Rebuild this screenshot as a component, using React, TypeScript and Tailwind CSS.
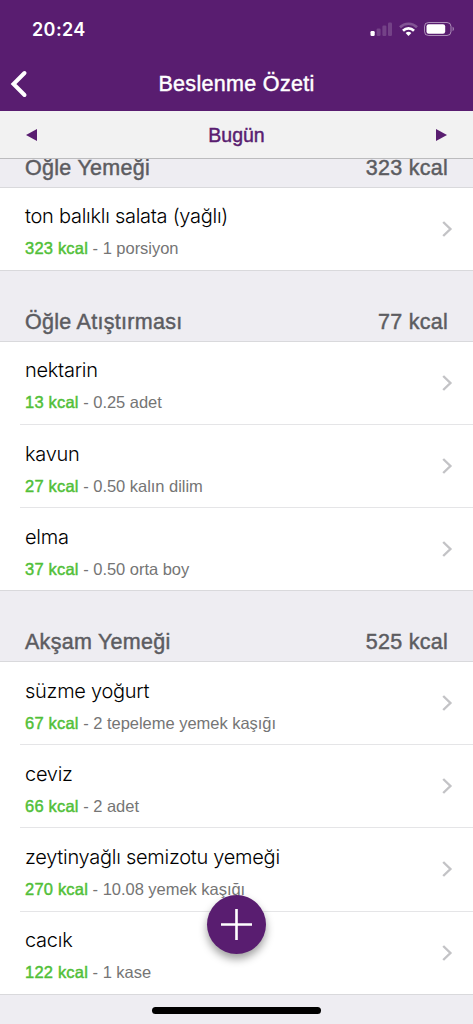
import React from 'react';

type Food = { name: string; kcal: string; amount: string };
type Meal = { title: string; kcal: string; foods: Food[] };

const meals: Meal[] = [
  {
    title: "Öğle Yemeği",
    kcal: "323 kcal",
    foods: [{ name: "ton balıklı salata (yağlı)", kcal: "323 kcal", amount: "1 porsiyon" }],
  },
  {
    title: "Öğle Atıştırması",
    kcal: "77 kcal",
    foods: [
      { name: "nektarin", kcal: "13 kcal", amount: "0.25 adet" },
      { name: "kavun", kcal: "27 kcal", amount: "0.50 kalın dilim" },
      { name: "elma", kcal: "37 kcal", amount: "0.50 orta boy" },
    ],
  },
  {
    title: "Akşam Yemeği",
    kcal: "525 kcal",
    foods: [
      { name: "süzme yoğurt", kcal: "67 kcal", amount: "2 tepeleme yemek kaşığı" },
      { name: "ceviz", kcal: "66 kcal", amount: "2 adet" },
      { name: "zeytinyağlı semizotu yemeği", kcal: "270 kcal", amount: "10.08 yemek kaşığı" },
      { name: "cacık", kcal: "122 kcal", amount: "1 kase" },
    ],
  },
];

const StatusBar = () => (
  <div className="h-[58px] pl-8 pr-[18px] flex items-center justify-between">
    <span className="font-['Inter'] text-[18px] font-semibold tracking-[0.4px]">20:24</span>
    <div className="flex items-center gap-[6px]">
      <svg width="23" height="14" viewBox="0 0 23 14" fill="white">
        <rect x="0.5" y="9" width="4.2" height="5" rx="1.2" />
        <g opacity="0.16">
          <rect x="6.6" y="6.5" width="4" height="7.5" rx="1.2" />
          <rect x="12.4" y="3.5" width="4" height="10.5" rx="1.2" />
          <rect x="18" y="0.5" width="4" height="13.5" rx="1.2" />
        </g>
      </svg>
      <svg width="19" height="14" viewBox="0 0 19 14" fill="none" stroke="white" strokeWidth="2.7">
        <path d="M1 5.2a12.2 12.2 0 0 1 17 0" opacity="0.25" />
        <path d="M4 8.7a7.9 7.9 0 0 1 11 0" />
        <path d="M6.6 11.1a4.2 4.2 0 0 1 5.8 0L9.5 14z" fill="white" stroke="none" />
      </svg>
      <svg width="31" height="14" viewBox="0 0 31 14">
        <rect x="0.5" y="0.5" width="26.5" height="13" rx="4" fill="none" stroke="white" strokeOpacity="0.5" />
        <rect x="2.5" y="2.2" width="18.7" height="9.6" rx="2.2" fill="white" />
        <path d="M28.6 4.8c1.6.6 1.6 3.8 0 4.4z" fill="white" fillOpacity="0.5" />
      </svg>
    </div>
  </div>
);

const FoodRow = ({ food, last }: { food: Food; last: boolean }) => (
  <div className={`h-[83.2px] flex ${last ? "border-b border-[#d9d9dc]" : "pl-5"}`}>
    <div className={`flex-1 flex items-center justify-between pr-[20px] ${last ? "pl-[25px]" : "pl-[5px] border-b border-[#e5e5e7]"}`}>
      <div className="pt-1 flex flex-col">
        <div className="font-['Inter'] font-light text-[20px] leading-[26px] tracking-[-0.27px] text-black whitespace-nowrap">{food.name}</div>
        <div className="mt-[9px] text-[16.5px] leading-5 text-[#757575] whitespace-nowrap">
          <span className="tracking-[0.2px] text-[#51bf38] [-webkit-text-stroke:0.45px_#51bf38]">{food.kcal}</span>
          <span className="tracking-[-0.03px]"> - {food.amount}</span>
        </div>
      </div>
      <svg width="12" height="16" viewBox="0 0 12 16" fill="none" stroke="#c3c3c6" strokeWidth="2.4">
        <path d="M2.2 1 9.4 8l-7.2 7" />
      </svg>
    </div>
  </div>
);

const MealSection = ({ meal }: { meal: Meal }) => (
  <section>
    <div className="h-[70.7px] px-[25px] pb-[7px] flex items-end justify-between border-b border-[#d9d9dc] text-[21.5px] leading-6 tracking-[0.28px] text-[#5c5c61] [-webkit-text-stroke:0.45px_#5c5c61]">
      <h2>{meal.title}</h2>
      <span>{meal.kcal}</span>
    </div>
    <div className="bg-white">
      {meal.foods.map((food, i) => (
        <FoodRow key={food.name} food={food} last={i === meal.foods.length - 1} />
      ))}
    </div>
  </section>
);

export default function App() {
  return (
    <div className="relative h-[1024px] w-[473px] flex flex-col overflow-hidden bg-[#eeedf2] font-['Liberation_Sans',sans-serif]">
      <header className="h-[111px] shrink-0 bg-[#591d70] text-white">
        <StatusBar />
        <div className="h-[51px] grid grid-cols-[60px_1fr_60px] items-center">
          <button className="pl-[10px]" aria-label="Geri">
            <svg width="18" height="28" viewBox="0 0 18 28" fill="none" stroke="white" strokeWidth="4" strokeLinecap="round">
              <path d="M14.5 3 3.5 14l11 11" />
            </svg>
          </button>
          <h1 className="pt-px text-center text-[21.5px] tracking-[0.32px] [-webkit-text-stroke:0.45px_white]">Beslenme Özeti</h1>
        </div>
      </header>

      <div className="h-12 shrink-0 px-[26px] flex items-center justify-between border-b border-[#bcbcbe] bg-[#f2f2f2] text-[#591d70]">
        <svg width="11" height="12" viewBox="0 0 11 12" fill="currentColor"><path d="M11 0v12L0 6z" /></svg>
        <span className="pt-0.5 text-[19.5px] [-webkit-text-stroke:0.45px_#591d70]">Bugün</span>
        <svg width="11" height="12" viewBox="0 0 11 12" fill="currentColor"><path d="M0 0v12l11-6z" /></svg>
      </div>

      <main className="flex-1 overflow-hidden">
        {/* list is scrolled, so the first heading sits partly under the date bar */}
        <div className="-mt-[41.8px]">
          {meals.map((meal) => <MealSection key={meal.title} meal={meal} />)}
        </div>
      </main>

      <button className="absolute left-[207px] top-[895px] size-[59px] rounded-full bg-[#591d70] flex items-center justify-center shadow-[0_5px_9px_rgba(0,0,0,0.38)]" aria-label="Ekle">
        <svg width="31" height="31" viewBox="0 0 31 31" stroke="white" strokeWidth="2.6">
          <path d="M15.5 0v31M0 15.5h31" />
        </svg>
      </button>
      <div className="absolute left-[152px] top-[1007px] h-[7px] w-[169px] rounded-full bg-black" />
    </div>
  );
}
